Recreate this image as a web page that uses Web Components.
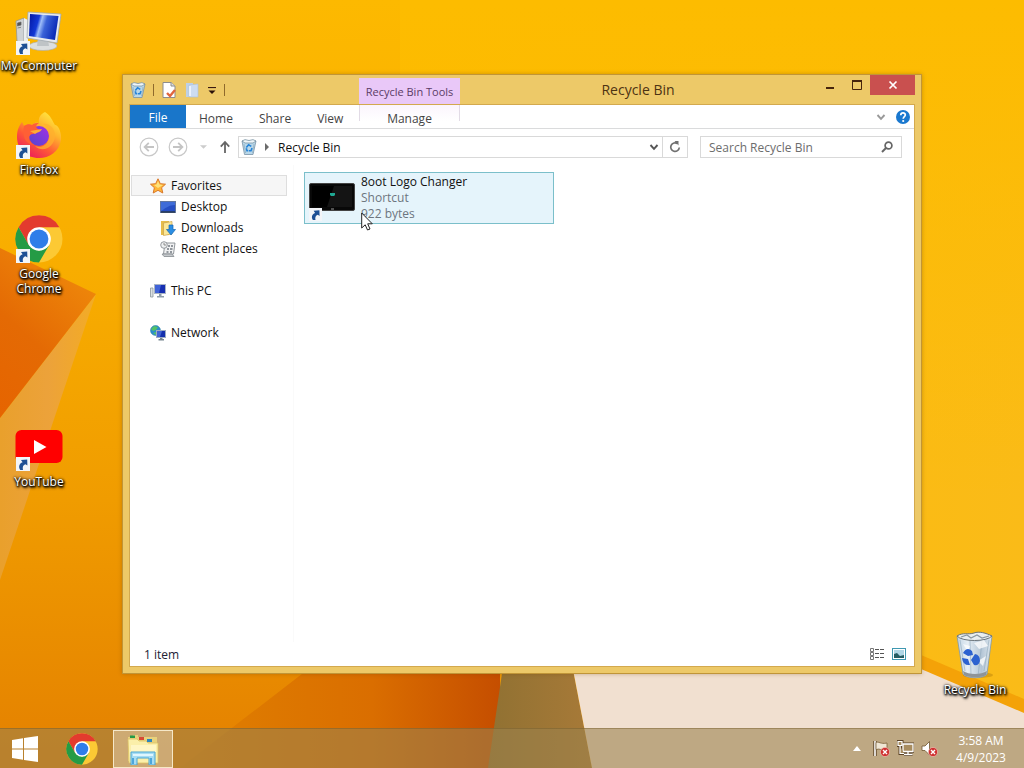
<!DOCTYPE html>
<html lang="en">
<head>
<meta charset="utf-8">
<title>Recycle Bin</title>
<style>
  html, body {
    margin: 0;
    height: 100%;
    overflow: hidden;
  }
  body {
    font: 12px/15px "Open Sans", "Noto Sans", sans-serif;
    color: #111;
  }
</style>
</head>
<body>
<desktop-shell>
  <desktop-icon icon="computer" label="My Computer" shortcut style="grid-area: 1 / 1"></desktop-icon>
  <desktop-icon icon="firefox" label="Firefox" shortcut style="grid-area: 2 / 1"></desktop-icon>
  <desktop-icon icon="chrome" label="Google Chrome" shortcut style="grid-area: 3 / 1"></desktop-icon>
  <desktop-icon icon="youtube" label="YouTube" shortcut style="grid-area: 5 / 1"></desktop-icon>
  <desktop-icon icon="bin" label="Recycle Bin" style="grid-area: 7 / 3"></desktop-icon>

  <explorer-window slot="windows">
    <title-bar slot="title">Recycle Bin</title-bar>
    <ribbon-tabs slot="ribbon"></ribbon-tabs>
    <address-bar slot="address">Recycle Bin</address-bar>
    <nav-pane slot="nav">
      <nav-item icon="star" selected>Favorites</nav-item>
      <nav-item icon="desktop" child>Desktop</nav-item>
      <nav-item icon="downloads" child>Downloads</nav-item>
      <nav-item icon="recent" child>Recent places</nav-item>
      <nav-item icon="pc" spaced>This PC</nav-item>
      <nav-item icon="network" spaced>Network</nav-item>
    </nav-pane>
    <file-tile>
      <span slot="name">8oot Logo Changer</span>
      <span slot="type">Shortcut</span>
      <span slot="size">922 bytes</span>
    </file-tile>
    <status-bar slot="status">1 item</status-bar>
  </explorer-window>

  <task-bar slot="taskbar"></task-bar>
  <mouse-cursor slot="windows"></mouse-cursor>
</desktop-shell>

<script>
const chromeArt = `
  <circle cx="24" cy="24" r="23.5" fill="#fcc934"/>
  <path d="M24 12.2H44.4A23.5 23.5 0 0 0 3.6 12.2L13.8 30Z" fill="#e33b2e"/>
  <path d="M13.8 30L3.6 12.2A23.5 23.5 0 0 0 24 47.5L34.2 30L24 35.8Z" fill="#259b45"/>
  <circle cx="24" cy="24" r="11.8" fill="#fff"/>
  <circle cx="24" cy="24" r="9.4" fill="#2f7de9"/>`;

const smallBin = `
  <path d="M1 2L3.5 15.5H12L15 2Z" fill="#b9d8ea" stroke="#7892a6" stroke-width=".8"/>
  <path d="M1 2L4 .6 8 1.5 12 .6 15 2 12 4H4Z" fill="#eef5f8" stroke="#6f899b" stroke-width=".7"/>
  <path d="M3 5L4.6 14M13 5L11.5 14" stroke="#9cb9ca" stroke-width="1"/>
  <path d="M5.3 8.6L7.6 5.8 10.3 7.4M11 9L10 11.8H8M5.3 9.2L6 11.7H7.3" fill="none" stroke="#2684d8" stroke-width="1.6"/>`;

const redBadge = `<circle cx="12" cy="12" r="4.6" fill="#cf3232" stroke="#f3c9bd" stroke-width=".6"/>
  <path d="M10 10L14 14M14 10L10 14" stroke="#fff" stroke-width="1.4"/>`;

// name: [viewBox, artwork]
const ICONS = {
  computer: ['0 0 48 48', `
    <defs><linearGradient id="s" x1="0" y1="0" x2="1" y2=".25"><stop offset="0" stop-color="#0316a0"/><stop offset=".35" stop-color="#1238d6"/><stop offset=".46" stop-color="#9dbcf8"/><stop offset=".62" stop-color="#3a62d8"/><stop offset="1" stop-color="#0c2cb8"/></linearGradient></defs>
    <path d="M1 14L9 11V39L2 34Z" fill="#cfd2d4" stroke="#8e9294" stroke-width=".7"/>
    <path d="M9 11L13 13V39L9 39Z" fill="#eceeee"/>
    <path d="M2.5 16L6 15V18L2.5 19ZM2.5 21L6 20.3" fill="#555" stroke="#666" stroke-width=".7"/>
    <ellipse cx="28" cy="39" rx="14" ry="4.5" fill="#dcdfdf" stroke="#aaa" stroke-width=".6"/>
    <path d="M23 31L33 33 34 39H22Z" fill="#bfc4c6"/>
    <path d="M13 5L46 7 42 36 12 31Z" fill="#e8ebee" stroke="#a0a8ae" stroke-width=".8"/>
    <path d="M15 7L43.5 9 40 33 14 29Z" fill="url(#s)"/>`],
  firefox: ['0 0 48 48', `
    <defs><linearGradient id="f" x1=".85" y1="0" x2=".2" y2="1"><stop offset="0" stop-color="#fff044"/><stop offset=".35" stop-color="#ffb32c"/><stop offset=".65" stop-color="#ff5a36"/><stop offset="1" stop-color="#e91560"/></linearGradient>
    <linearGradient id="p" x1="1" y1="0" x2="0" y2="1"><stop offset="0" stop-color="#a52fe5"/><stop offset="1" stop-color="#5147cf"/></linearGradient></defs>
    <path d="M30 1C36 5 37 9 40 14C43 13 47 22 46 29C44 41 34 47 24 47C11 47 2 38 2 26C2 19 4 15 7 11C8 13 9 14 9 15C12 13 15 13 17 14C20 10 24 12 24 12C23 6 26 3 30 1Z" fill="url(#f)"/>
    <circle cx="24" cy="25" r="10" fill="url(#p)"/>
    <path d="M9 15C12 13 15 13 17 14C19 12 22 12 24 12C21 14 20 16 23 18L25 19C23 22 19 22 18 23C13 23 12 31 19 34C9 33 7 23 9 15Z" fill="#ff5f35"/>
    <path d="M15 20L27 18C25 22 22 21 20 23Z" fill="#ffab36"/>
    <path d="M28 13C35 17 36 24 33 30C31 35 25 37 20 35C28 43 40 35 40 25C40 17 34 12 28 13Z" fill="#ffb02e" opacity=".75"/>`],
  chrome: ['0 0 48 48', chromeArt],
  youtube: ['0 0 48 48', `
    <rect x=".5" y="7" width="47" height="33" rx="6" fill="#f00"/>
    <path d="M19 17V31L31.5 24Z" fill="#fff"/>`],
  bin: ['0 0 48 48', `
    <defs><linearGradient id="b" x1="0" x2="1"><stop offset="0" stop-color="#c2d4e4"/><stop offset=".3" stop-color="#e6eef4"/><stop offset=".7" stop-color="#b4c6d6"/><stop offset="1" stop-color="#dfe8ef"/></linearGradient></defs>
    <ellipse cx="27" cy="44" rx="15" ry="3" fill="#805000" opacity=".25"/>
    <path d="M6 5L12 43C15 48 33 48 36 43L41 5Z" fill="url(#b)" stroke="#7e98ad" stroke-width=".8"/>
    <path d="M9 9L14 40M38 9L33 40M19 9L20 44M31 10L27 45" stroke="#8da6ba" stroke-width=".7" opacity=".8"/>
    <path d="M6 5C12 1 17 4 23 2C28 0 35 2 41 5C36 11 11 11 6 5Z" fill="#e9eef0" stroke="#6b747a" stroke-width="1"/>
    <path d="M10 6L16 4 20 7 26 4 31 7 38 5" fill="none" stroke="#8b979f" stroke-width="1.2"/>
    <path d="M23 12L33 9 37 15 28 18ZM12 13L19 15 17 21ZM27 30L35 25 32 35Z" fill="#fff" opacity=".75"/>
    <path d="M12 22Q16 15 21 20L22 24 17 25ZM24 23Q29 24 29 30 28 35 23 34L20 29ZM11 27L17 28 19 34Q12 35 11 27Z" fill="#2c62d0"/>
    <path d="M12 40C18 44 30 44 36 40L35 44C31 47 17 47 13 44Z" fill="#8e9498"/>`],
  arrow: ['0 0 14 14', `
    <rect width="14" height="14" fill="#f3f5f8"/>
    <path d="M4.2 13C2.300 10 3 6.500 6.600 5.300L5 3 11.200 2.400 11.400 8.600 9.500 7.200C7 8 6.300 10 7 13Z" fill="#1d4f94"/>`],
  smallbin: ['0 0 16 16', smallBin],
  props: ['0 0 16 16', `
    <path d="M2 .5H10L14 4V15.5H2Z" fill="#fff" stroke="#8d8d8d"/>
    <path d="M10 .5V4H14" fill="#ddd" stroke="#8d8d8d"/>
    <path d="M6 11L9 14L14 8" fill="none" stroke="#e0663e" stroke-width="2.4"/>`],
  newfolder: ['0 0 16 16', `
    <path d="M2 1H9V15H2Z" fill="#bed0e6"/>
    <path d="M5 3L14 2V15H5Z" fill="#cddcf0" stroke="#a9bfdb" stroke-width=".6"/>
    <path d="M6 4V14" stroke="#f6faff" stroke-width="1.5"/>`],
  star: ['0 0 16 16', `
    <path d="M8 .8L10.300 5.700 15.500 6.200 11.600 9.700 12.800 15 8 12.300 3.200 15 4.400 9.700 .5 6.200 5.700 5.700Z" fill="#ffb638" stroke="#d9782b" stroke-width="1"/>
    <path d="M8 3L9.500 6.600 13 7 8 10 4 7 6.500 6.500Z" fill="#ffe27c"/>`],
  desktop: ['0 0 16 16', `
    <rect x=".5" y="2.500" width="15" height="11" fill="#264fc4" stroke="#62779f"/>
    <path d="M1 3H15V6C9 6 6 9 1 12Z" fill="#3f6cd8"/>
    <path d="M1 13H15" stroke="#29384f" stroke-width="1.5"/>`],
  downloads: ['0 0 16 16', `
    <path d="M1 1H9V15H1Z" fill="#e7bd4b"/>
    <path d="M3.500 3L12 1.500V14L3.500 15.500Z" fill="#fbe798" stroke="#c9a24a" stroke-width=".7"/>
    <path d="M9 5H13V9.500H15.500L11 15 6.500 9.500H9Z" fill="#2b8ee3" stroke="#1568b4" stroke-width=".7"/>`],
  recent: ['0 0 16 16', `
    <path d="M5 2H15L13.500 13H3.500Z" fill="#f0f1f2" stroke="#878c91" stroke-width=".9"/>
    <path d="M2 13H12L14 15.500H4Z" fill="#c5c9cc" stroke="#878c91" stroke-width=".8"/>
    <path d="M8 5H10M11 5H13M7 8H9M10 8H12.500M6.500 11H8.500M10 11H12" stroke="#737a81" stroke-width="1.300"/>
    <circle cx="4" cy="4" r="3.300" fill="#eef0f1" stroke="#8b9095" stroke-width=".9"/>
    <path d="M4 2V4H6" fill="none" stroke="#777" stroke-width=".8"/>`],
  pc: ['0 0 16 16', `
    <path d="M.5 5H3V14H.5Z" fill="#dce1e3" stroke="#8b979c" stroke-width=".8"/>
    <rect x="4.500" y="1.500" width="11" height="9" fill="#172fb2" stroke="#a9b4c5"/>
    <path d="M5 2H11L9 10H5Z" fill="#4063d8"/>
    <path d="M9 11H11.500V13H14V14.500H7V13H9Z" fill="#8e9da9"/>`],
  network: ['0 0 16 16', `
    <circle cx="5.500" cy="5.500" r="5" fill="#2b8dcd" stroke="#247a9a" stroke-width=".5"/>
    <path d="M1 4L4 1 8 2 6 5 3 6ZM3 8L6 7 6 10Z" fill="#54c267"/>
    <rect x="6.500" y="5.500" width="9" height="7" fill="#1330ad" stroke="#9cacc2"/>
    <path d="M7 6H12L10 12H7Z" fill="#4163d4"/>
    <path d="M10 13H12.500V14H14V15.500H8.500V14H10Z" fill="#76868f"/>`],
  laptop: ['0 0 46 30', `
    <rect x=".5" y=".5" width="45" height="27" rx="1.500" fill="#080808" stroke="#444"/>
    <path d="M3 3H43V24H3Z" fill="#000"/>
    <path d="M25 3H43V24H18Z" fill="#141414"/>
    <path d="M21 10H26V12L25 13H22L21 12Z" fill="#1fa893"/>
    <path d="M22 26H25" stroke="#999"/>`],
  back: ['0 0 20 20', `<circle cx="10" cy="10" r="8.800" fill="#fff" stroke="#c8c8c8" stroke-width="1.200"/><path d="M15 10H6M9.800 5.800L5.600 10 9.800 14.200" fill="none" stroke="#c4c4c4" stroke-width="1.800"/>`],
  forward: ['0 0 20 20', `<circle cx="10" cy="10" r="8.800" fill="#fff" stroke="#c8c8c8" stroke-width="1.200"/><path d="M5 10H14M10.200 5.800L14.400 10 10.200 14.200" fill="none" stroke="#c4c4c4" stroke-width="1.800"/>`],
  caret: ['0 0 8 4', `<path d="M0 0H8L4 4Z" fill="#ccc"/>`],
  up: ['0 0 12 14', `<path d="M6 13V3M1.800 6.600L6 2 10.200 6.600" fill="none" stroke="#666" stroke-width="1.800"/>`],
  right: ['0 0 6 8', `<path d="M1 0L5 4L1 8Z" fill="#6b6b6b"/>`],
  down: ['0 0 10 8', `<path d="M1.500 2L5 5.800 8.500 2" fill="none" stroke="currentColor" stroke-width="1.900"/>`],
  refresh: ['0 0 12 12', `<path d="M8.500 2.600A4.300 4.300 0 1 0 10.300 6.500" fill="none" stroke="#707070" stroke-width="1.700"/><path d="M5.500 0H9.500V4.500Z" fill="#707070"/>`],
  search: ['0 0 12 12', `<circle cx="7.500" cy="4.500" r="3.400" fill="none" stroke="#666" stroke-width="1.700"/><path d="M5 7L1 11" stroke="#666" stroke-width="2"/>`],
  help: ['0 0 14 14', `<circle cx="7" cy="7" r="7" fill="#1a78cf"/><path d="M4.800 5.200C4.800 2.200 9.400 2.300 9.300 5C9.200 6.500 7.200 6.800 7.200 8.800" fill="none" stroke="#fff" stroke-width="1.700"/><circle cx="7.200" cy="11" r="1.100" fill="#fff"/>`],
  customize: ['0 0 8 8', `<path d="M0 .5H8" stroke="#3b1a10" stroke-width="1.200"/><path d="M.5 3.500H7.500L4 7Z" fill="#2b1008"/>`],
  minimize: ['0 0 12 12', `<path d="M2 9H10" stroke="#46240c" stroke-width="2"/>`],
  maximize: ['0 0 12 12', `<path d="M1.500 2.500H10.500V10.500H1.500Z" fill="none" stroke="#46240c"/><path d="M1 2H11" stroke="#46240c" stroke-width="2"/>`],
  close: ['0 0 12 12', `<path d="M2.500 2.500L9.500 9.500M9.500 2.500L2.500 9.500" stroke="#fff" stroke-width="1.700"/>`],
  details: ['0 0 16 14', `<path d="M1.500 1.500H4.500V4.500H1.500ZM1.500 5.500H4.500V8.500H1.500ZM1.500 9.500H4.500V12.500H1.500Z" fill="#fff" stroke="#777"/><path d="M6 2.500H10M11 2.500H15M6 6.500H10M11 6.500H15M6 10.500H10M11 10.500H15" stroke="#555"/>`],
  tiles: ['0 0 14 12', `<rect x=".5" y=".5" width="13" height="11" fill="#fff" stroke="#3f98b1"/><path d="M2 2H12V10H2Z" fill="#b0d6e5"/><path d="M2 6L5 5 8 8 12 7V10H2Z" fill="#255d63"/>`],
  windows: ['0 0 26 26', `<path d="M0 4L11 2.300V12.500H0ZM12 2.100L26 0V12.500H12ZM0 13.500H11V23.700L0 22ZM12 13.500H26V26L12 23.900Z" fill="#fff"/>`],
  explorer: ['0 0 32 32', `
    <path d="M1 4H6V2H11V4H30V28H1Z" fill="#e8d27c"/>
    <path d="M3 2.500H8V5H3Z" fill="#249a48"/><path d="M12 4H17V7H12Z" fill="#d84a36"/><path d="M20 6H25V9H20Z" fill="#2c86bd"/>
    <path d="M1 6H10L12 8H19L21 10H31V30H2Z" fill="#fbefaa" stroke="#dcc166" stroke-width=".8"/>
    <path d="M4 12H29V19H4Z" fill="#fff6c5"/>
    <path d="M4 19H28V32H22V25H10V32H4Z" fill="#a6dcf3" stroke="#4ba6d3" stroke-width="1"/>
    <path d="M6 21H26V23H6Z" fill="#dff6ff"/>
    <path d="M6 25V31M24 25V31" stroke="#4da5da" stroke-width="2"/>`],
  hidden: ['0 0 8 5', `<path d="M0 5L4 0L8 5Z" fill="#fff"/>`],
  flag: ['0 0 17 17', `<path d="M2 1V16" stroke="#5b4326" stroke-width="3.400"/><path d="M2 1V16" stroke="#fff" stroke-width="1.600"/><path d="M3 2.500C6 1 7 4.500 14 3V10C9 11 7 8 3 9.500Z" fill="#efe6d4" stroke="#7a6038" stroke-width=".8"/>${redBadge}`],
  lan: ['0 0 17 16', `<path d="M6 3.500H16V11H6ZM11 11V14M7 14H15.500M1 1H5V5H1ZM3 5V13H7" fill="none" stroke="#5b4326" stroke-width="3"/><path d="M6 3.500H16V11H6ZM11 11V14M7 14H15.500" fill="#a88d60" stroke="#fff" stroke-width="1.300"/><path d="M1 1H5V5H1ZM3 5V13H7" fill="#a88d60" stroke="#fff" stroke-width="1.200"/>`],
  volume: ['0 0 17 17', `<path d="M1 6H4L8.500 1.500V15L4 10.500H1Z" fill="#fff" stroke="#6f5530" stroke-width=".8"/>${redBadge}`],
  cursor: ['0 0 12 19', `<path d="M.7 1V16L4.200 12.800 6.500 18 9 17 6.700 11.800H11.300Z" fill="#fff" stroke="#222" stroke-width="1"/>`],
};

class ShellIcon extends HTMLElement {
  constructor() {
    super();
    this.attachShadow({ mode: 'open' });
  }

  connectedCallback() {
    const [box, art] = ICONS[this.getAttribute('name')];
    this.shadowRoot.innerHTML = `
      <style>
        :host { display: block; flex: none; width: 16px; height: 16px; }
        svg { display: block; width: 100%; height: 100%; }
      </style>
      <svg viewBox="${box}" aria-hidden="true">${art}</svg>
    `;
  }
}
customElements.define('shell-icon', ShellIcon);

// Elements whose shadow markup is built once from a string
class ShellElement extends HTMLElement {
  connectedCallback() {
    if (this.shadowRoot) return;
    this.attachShadow({ mode: 'open' });
    this.shadowRoot.innerHTML = `
      <style>
        :host, * { box-sizing: border-box; }
        button, input {
          margin: 0;
          padding: 0;
          border: 0;
          background: none;
          font: inherit;
          color: inherit;
        }
        a { color: inherit; text-decoration: none; }
      </style>
      ${this.template()}
    `;
  }
}

class DesktopShell extends ShellElement {
  template() {
    return `
      <style>
        :host {
          position: relative;
          display: flex;
          flex-direction: column;
          height: 100vh;
          background: #f0a000;
        }
        .wallpaper {
          position: absolute;
          inset: 0;
          width: 100%;
          height: 100%;
        }
        main {
          position: relative;
          flex: 1;
          min-height: 0;
        }
        .icons {
          display: grid;
          grid-template-columns: 78px 1fr 78px;
          grid-auto-rows: 104px;
          padding: 7px 10px 0 0;
        }
      </style>
      <svg class="wallpaper" viewBox="0 0 1024 768" preserveAspectRatio="none" aria-hidden="true">
        <defs>
          <linearGradient id="sky" x1="0" y1="0" x2="0" y2="1">
            <stop offset="0" stop-color="#fdb900"/>
            <stop offset=".35" stop-color="#f8ad00"/>
            <stop offset=".65" stop-color="#f09c00"/>
            <stop offset="1" stop-color="#e48000"/>
          </linearGradient>
          <linearGradient id="right" x1="0" y1="0" x2="1" y2="0">
            <stop offset="0" stop-color="#fcbb10" stop-opacity="0"/>
            <stop offset=".6" stop-color="#fcbb10"/>
            <stop offset="1" stop-color="#fabb18"/>
          </linearGradient>
          <linearGradient id="top" x1="0" y1="0" x2="0" y2="1">
            <stop offset="0" stop-color="#fdbc00"/>
            <stop offset="1" stop-color="#fdbc00" stop-opacity="0"/>
          </linearGradient>
          <linearGradient id="wedge" x1="0" y1="1" x2=".5" y2="0">
            <stop offset="0" stop-color="#e66400"/>
            <stop offset=".5" stop-color="#e46a04"/>
            <stop offset="1" stop-color="#ee860a"/>
          </linearGradient>
          <linearGradient id="fold" x1="0" y1="0" x2="1" y2="0">
            <stop offset="0" stop-color="#e9a02c"/>
            <stop offset=".5" stop-color="#eca23a"/>
            <stop offset="1" stop-color="#f3ac25"/>
          </linearGradient>
          <linearGradient id="ember" x1="0" y1="0" x2="1" y2="0">
            <stop offset="0" stop-color="#e08000"/>
            <stop offset=".6" stop-color="#da6e00"/>
            <stop offset="1" stop-color="#c54e00"/>
          </linearGradient>
          <linearGradient id="bark" x1="0" y1="0" x2="1" y2="0">
            <stop offset="0" stop-color="#907132"/>
            <stop offset="1" stop-color="#a87a38"/>
          </linearGradient>
        </defs>
        <rect width="1024" height="768" fill="url(#sky)"/>
        <rect x="400" width="624" height="768" fill="url(#right)"/>
        <rect x="400" width="624" height="500" fill="url(#top)"/>
        <path d="M96 294L0 418V580Z" fill="url(#fold)"/>
        <path d="M0 248L96 294L0 418Z" fill="url(#wedge)"/>
        <path d="M320 660L180 768H500V660Z" fill="url(#ember)"/>
        <path d="M504 660L488 768H592L571 660Z" fill="url(#bark)"/>
        <path d="M571 659H900L1024 712V768H592Z" fill="#f1e0d0"/>
        <path d="M900 646L1024 699V713L900 660Z" fill="#f4a208"/>
      </svg>
      <main>
        <div class="icons"><slot></slot></div>
        <slot name="windows"></slot>
      </main>
      <slot name="taskbar"></slot>
    `;
  }
}
customElements.define('desktop-shell', DesktopShell);

class DesktopIcon extends ShellElement {
  template() {
    return `
      <style>
        :host { display: block; }
        button {
          display: flex;
          flex-direction: column;
          align-items: center;
          gap: 3px;
          width: 100%;
          color: #fff;
          text-shadow: 0 1px 2px #000, 1px 1px 2px #000, 0 0 3px #000, 1px 2px 3px rgba(0, 0, 0, .8);
        }
        .art { position: relative; }
        .art > shell-icon { width: 48px; height: 48px; }
        .art > .arrow {
          position: absolute;
          left: 1px;
          bottom: 0;
          width: 14px;
          height: 14px;
        }
        .label { max-width: 100%; }
      </style>
      <button type="button">
        <span class="art">
          <shell-icon name="${this.getAttribute('icon')}"></shell-icon>
          ${this.hasAttribute('shortcut') ? '<shell-icon class="arrow" name="arrow"></shell-icon>' : ''}
        </span>
        <span class="label">${this.getAttribute('label')}</span>
      </button>
    `;
  }
}
customElements.define('desktop-icon', DesktopIcon);

class ExplorerWindow extends ShellElement {
  template() {
    return `
      <style>
        :host {
          --tabs-width: 229px;
          --context-width: 101px;
          position: absolute;
          inset: 74px 102px 54px 122px;
          display: flex;
          flex-direction: column;
          padding: 0 7px 7px 7px;
          border: 1px solid #c09538;
          background: #edc968;
          box-shadow: 0 0 4px rgba(110, 70, 0, .35);
        }
        .client {
          flex: 1;
          display: flex;
          flex-direction: column;
          min-height: 0;
          outline: 1px solid #d3a94e;
          background: #fff;
        }
        .body {
          flex: 1;
          display: flex;
          min-height: 0;
        }
        .files {
          flex: 1;
          padding: 7px 10px;
          border-left: 1px solid #fafafa;
        }
      </style>
      <slot name="title"></slot>
      <div class="client">
        <slot name="ribbon"></slot>
        <slot name="address"></slot>
        <div class="body">
          <slot name="nav"></slot>
          <div class="files"><slot></slot></div>
        </div>
        <slot name="status"></slot>
      </div>
    `;
  }
}
customElements.define('explorer-window', ExplorerWindow);

class TitleBar extends ShellElement {
  template() {
    return `
      <style>
        :host {
          display: flex;
          height: 30px;
          margin-right: -1px;
        }
        .quick {
          display: flex;
          flex: 0 0 var(--tabs-width);
          align-items: center;
          gap: 7px;
        }
        .quick button { display: block; }
        .quick i {
          width: 1px;
          height: 12px;
          background: #8f6a2c;
        }
        .quick .customize { width: 8px; height: 8px; margin: 2px 1px 0; }
        .context {
          flex: 0 0 var(--context-width);
          align-self: flex-end;
          height: 27px;
          line-height: 28px;
          text-align: center;
          white-space: nowrap;
          font-size: 11px;
          color: #5b3c66;
          background: #e9c8f8;
        }
        h1 {
          flex: 1;
          margin: 0;
          font-size: 14px;
          font-weight: 400;
          line-height: 30px;
          text-align: center;
          color: #4d3313;
        }
        .controls { display: flex; }
        .controls button {
          display: grid;
          place-items: center;
          width: 27px;
          height: 20px;
        }
        .controls shell-icon { width: 12px; height: 12px; }
        .controls .close { width: 45px; background: #c9504f; }
      </style>
      <div class="quick">
        <shell-icon name="smallbin"></shell-icon>
        <i></i>
        <button type="button" aria-label="Properties"><shell-icon name="props"></shell-icon></button>
        <button type="button" aria-label="New folder"><shell-icon name="newfolder"></shell-icon></button>
        <button type="button" aria-label="Customize"><shell-icon class="customize" name="customize"></shell-icon></button>
        <i></i>
      </div>
      <div class="context">Recycle Bin Tools</div>
      <h1><slot></slot></h1>
      <div class="controls">
        <button type="button" aria-label="Minimize"><shell-icon name="minimize"></shell-icon></button>
        <button type="button" aria-label="Maximize"><shell-icon name="maximize"></shell-icon></button>
        <button type="button" class="close" aria-label="Close"><shell-icon name="close"></shell-icon></button>
      </div>
    `;
  }
}
customElements.define('title-bar', TitleBar);

class RibbonTabs extends ShellElement {
  template() {
    return `
      <style>
        :host {
          display: flex;
          flex: none;
          height: 24px;
          border-bottom: 1px solid #dadbdc;
          color: #444;
        }
        .tabs { display: flex; flex: 0 0 var(--tabs-width); min-width: 0; }
        button { height: 23px; padding: 3px 13px 0; }
        .tabs .file {
          width: 56px;
          padding: 1px 0 0;
          color: #fff;
          background: #1976ca;
        }
        .context {
          flex: 0 0 var(--context-width);
          height: 16px;
          border: solid #e2dbe6;
          border-width: 0 1px;
          background: linear-gradient(#fbf5fd, #fff);
        }
        .context button { width: 100%; padding: 3px 0 0; }
        .end {
          flex: 1;
          display: flex;
          align-items: center;
          justify-content: flex-end;
          gap: 10px;
          padding-right: 4px;
        }
        .end button { display: grid; place-items: center; height: 14px; padding: 0; color: #999; }
        .end shell-icon { width: 14px; height: 14px; }
        .end .fold { width: 10px; }
      </style>
      <div class="tabs">
        <button type="button" class="file">File</button>
        <button type="button">Home</button>
        <button type="button">Share</button>
        <button type="button">View</button>
      </div>
      <div class="context"><button type="button">Manage</button></div>
      <div class="end">
        <button type="button" aria-label="Expand ribbon"><shell-icon class="fold" name="down"></shell-icon></button>
        <button type="button" aria-label="Help"><shell-icon name="help"></shell-icon></button>
      </div>
    `;
  }
}
customElements.define('ribbon-tabs', RibbonTabs);

class AddressBar extends ShellElement {
  template() {
    return `
      <style>
        :host {
          display: flex;
          flex: none;
          align-items: center;
          height: 36px;
          padding: 0 12px 0 9px;
        }
        button { display: grid; place-items: center; flex: none; }
        .round { width: 20px; height: 20px; margin-right: 9px; }
        .round shell-icon { width: 20px; height: 20px; }
        .history { width: 12px; margin-right: 10px; }
        .history shell-icon { width: 7px; height: 4px; }
        .up { width: 12px; margin-right: 7px; }
        .up shell-icon { width: 12px; height: 14px; }
        .path, .search {
          display: flex;
          align-items: center;
          height: 22px;
          border: 1px solid #d9d9d9;
        }
        .path { flex: 1; padding-left: 2px; }
        .path a { flex: 1; color: #111; }
        .crumb { width: 6px; height: 8px; margin: 0 8px 0 7px; }
        .path button { width: 17px; height: 20px; color: #555; }
        .path button shell-icon { width: 10px; height: 8px; }
        .path .refresh { width: 25px; border-left: 1px solid #d9d9d9; }
        .path .refresh shell-icon { width: 12px; height: 12px; }
        .search {
          flex: 0 0 202px;
          margin-left: 12px;
          padding: 0 8px;
        }
        input { flex: 1; min-width: 0; outline: none; }
        input::placeholder { color: #6d6d6d; opacity: 1; }
        .search shell-icon { width: 12px; height: 12px; }
      </style>
      <button type="button" class="round" aria-label="Back"><shell-icon name="back"></shell-icon></button>
      <button type="button" class="round" aria-label="Forward"><shell-icon name="forward"></shell-icon></button>
      <button type="button" class="history" aria-label="Recent locations"><shell-icon name="caret"></shell-icon></button>
      <button type="button" class="up" aria-label="Up"><shell-icon name="up"></shell-icon></button>
      <div class="path">
        <shell-icon name="smallbin"></shell-icon>
        <shell-icon class="crumb" name="right"></shell-icon>
        <a href="#bin"><slot></slot></a>
        <button type="button" aria-label="Previous locations"><shell-icon name="down"></shell-icon></button>
        <button type="button" class="refresh" aria-label="Refresh"><shell-icon name="refresh"></shell-icon></button>
      </div>
      <label class="search">
        <input type="text" placeholder="Search Recycle Bin" aria-label="Search Recycle Bin">
        <shell-icon name="search"></shell-icon>
      </label>
    `;
  }
}
customElements.define('address-bar', AddressBar);

class NavPane extends ShellElement {
  template() {
    return `
      <style>
        :host {
          flex: 0 0 163px;
          padding: 10px 6px 0 1px;
        }
      </style>
      <nav><slot></slot></nav>
    `;
  }
}
customElements.define('nav-pane', NavPane);

class NavItem extends ShellElement {
  template() {
    return `
      <style>
        :host { display: block; }
        :host([spaced]) { margin-top: 21px; }
        a {
          display: flex;
          align-items: center;
          gap: 5px;
          height: 21px;
          padding-left: 18px;
          border: 1px solid transparent;
        }
        :host([child]) a { padding-left: 28px; }
        :host([selected]) a { border-color: #dedede; background: #f6f6f6; }
      </style>
      <a href="#${this.getAttribute('icon')}">
        <shell-icon name="${this.getAttribute('icon')}"></shell-icon>
        <slot></slot>
      </a>
    `;
  }
}
customElements.define('nav-item', NavItem);

class FileTile extends ShellElement {
  template() {
    return `
      <style>
        :host {
          display: flex;
          align-items: center;
          gap: 6px;
          width: 250px;
          height: 52px;
          padding: 0 4px;
          border: 1px solid #7bbfca;
          background: #e5f4fb;
          line-height: 16px;
        }
        .thumb {
          position: relative;
          width: 46px;
          height: 30px;
        }
        .thumb > shell-icon { width: 46px; height: 30px; }
        .thumb > .arrow {
          position: absolute;
          left: 0;
          bottom: -8px;
          width: 13px;
          height: 13px;
        }
        .text {
          display: flex;
          flex-direction: column;
          color: #6d7680;
        }
        .name { color: #111; }
      </style>
      <div class="thumb">
        <shell-icon name="laptop"></shell-icon>
        <shell-icon class="arrow" name="arrow"></shell-icon>
      </div>
      <div class="text">
        <span class="name"><slot name="name"></slot></span>
        <slot name="type"></slot>
        <slot name="size"></slot>
      </div>
    `;
  }
}
customElements.define('file-tile', FileTile);

class StatusBar extends ShellElement {
  template() {
    return `
      <style>
        :host {
          display: flex;
          align-items: center;
          gap: 7px;
          height: 24px;
          padding: 0 8px 0 14px;
          color: #223;
        }
        span { flex: 1; }
        .tiles { width: 14px; height: 12px; }
      </style>
      <span><slot></slot></span>
      <button type="button" aria-label="Details view"><shell-icon name="details"></shell-icon></button>
      <button type="button" aria-label="Large icons view"><shell-icon class="tiles" name="tiles"></shell-icon></button>
    `;
  }
}
customElements.define('status-bar', StatusBar);

class TaskBar extends ShellElement {
  template() {
    return `
      <style>
        :host {
          position: relative;
          display: flex;
          align-items: center;
          height: 40px;
          border-top: 1px solid rgba(110, 85, 35, .4);
          background: rgba(155, 130, 76, .59);
          color: #fff;
        }
        button { display: grid; place-items: center; }
        .start { width: 50px; height: 39px; }
        .start shell-icon { width: 26px; height: 26px; }
        .app { width: 60px; height: 38px; }
        .app shell-icon { width: 32px; height: 32px; }
        .start + .app { width: 63px; }
        .active {
          border: 1px solid #f6e8c8;
          background: rgba(225, 210, 185, .5);
        }
        .tray {
          display: flex;
          align-items: center;
          gap: 7px;
          margin-left: auto;
        }
        .tray shell-icon { width: 17px; height: 17px; }
        .tray .hidden { width: 8px; height: 5px; margin-right: 5px; }
        time {
          width: 86px;
          line-height: 17px;
          text-align: center;
        }
      </style>
      <button type="button" class="start" aria-label="Start"><shell-icon name="windows"></shell-icon></button>
      <button type="button" class="app" aria-label="Google Chrome"><shell-icon name="chrome"></shell-icon></button>
      <button type="button" class="app active" aria-label="File Explorer"><shell-icon name="explorer"></shell-icon></button>
      <div class="tray">
        <button type="button" aria-label="Show hidden icons"><shell-icon class="hidden" name="hidden"></shell-icon></button>
        <button type="button" aria-label="Action Center"><shell-icon name="flag"></shell-icon></button>
        <button type="button" aria-label="Network"><shell-icon name="lan"></shell-icon></button>
        <button type="button" aria-label="Volume"><shell-icon name="volume"></shell-icon></button>
      </div>
      <time datetime="2023-04-09T03:58">3:58 AM<br>4/9/2023</time>
    `;
  }
}
customElements.define('task-bar', TaskBar);

class MouseCursor extends ShellElement {
  template() {
    return `
      <style>
        :host {
          position: absolute;
          left: 361px;
          top: 212px;
          pointer-events: none;
        }
        shell-icon { width: 12px; height: 19px; }
      </style>
      <shell-icon name="cursor"></shell-icon>
    `;
  }
}
customElements.define('mouse-cursor', MouseCursor);
</script>
</body>
</html>
